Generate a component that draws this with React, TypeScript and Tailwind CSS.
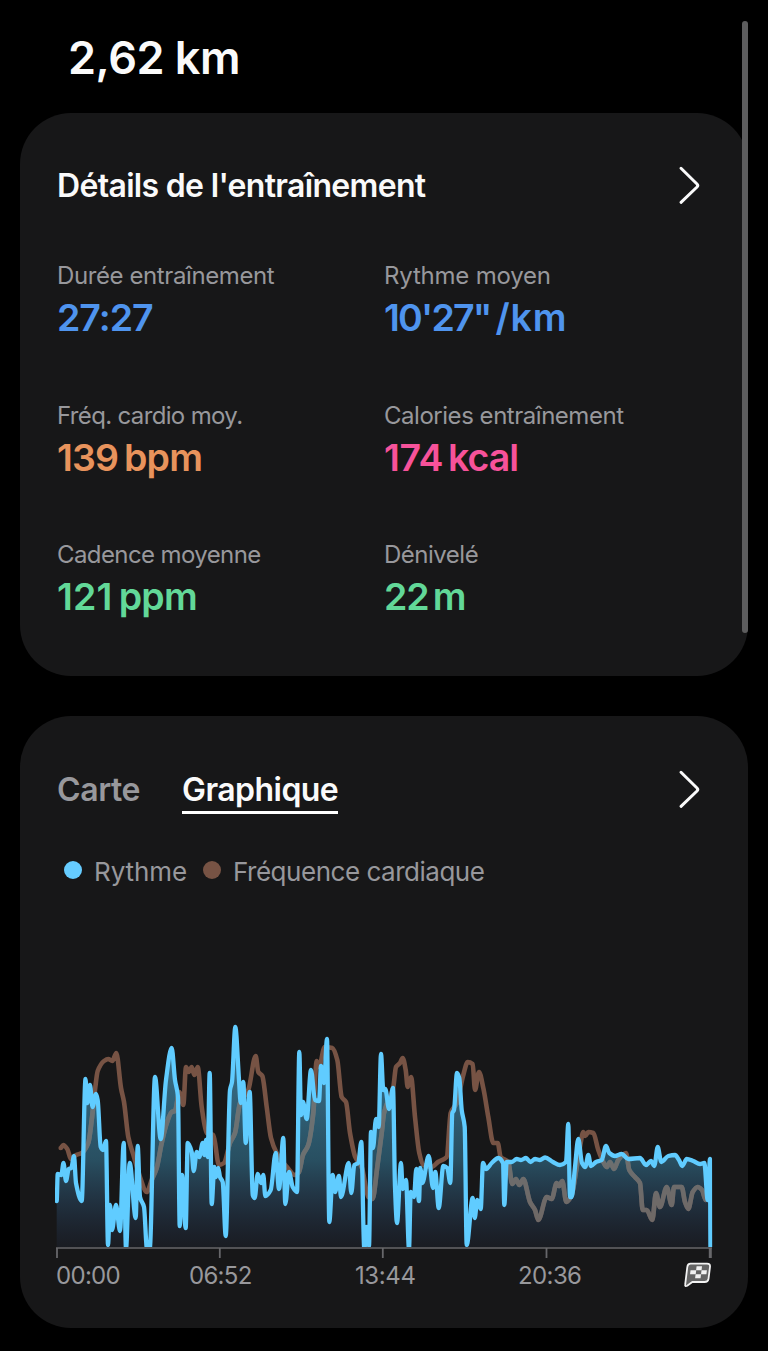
import { clsx } from "clsx";

const stats = [
  { label: "Durée entraînement", value: "27:27", unit: "", style: "text-[#4f94ee] tracking-[-1px]", labelStyle: "tracking-[-0.4px]" },
  { label: "Rythme moyen", value: "10'27\"", unit: "/km", style: "text-[#4f94ee] gap-[5px] tracking-[-1.8px]", unitStyle: "tracking-[0.8px]", labelStyle: "tracking-[-0.2px]" },
  { label: "Fréq. cardio moy.", value: "139", unit: "bpm", style: "text-[#e8935c] gap-[6px] tracking-[-0.9px]", unitStyle: "tracking-[-0.8px]", labelStyle: "tracking-[-0.65px]" },
  { label: "Calories entraînement", value: "174", unit: "kcal", style: "text-[#f7529a] gap-[5px] tracking-[-0.4px]", unitStyle: "tracking-[-1px]", labelStyle: "tracking-[-0.47px]" },
  { label: "Cadence moyenne", value: "121", unit: "ppm", style: "text-[#62d898] gap-[6px] tracking-[0.2px]", unitStyle: "tracking-[-0.8px]", labelStyle: "tracking-[-0.6px]" },
  { label: "Dénivelé", value: "22", unit: "m", style: "text-[#62d898] gap-[4px] tracking-[-1px]", unitStyle: "tracking-[-0.5px]", labelStyle: "tracking-[-0.5px]" },
];

const PACE =
  "56.7,1201 57.7,1174 61.3,1175 63.5,1163 66,1181 68.7,1169 71.3,1168 74,1156 76,1183 81.7,1201 85.5,1079 87.3,1103 90,1085 92.5,1107 96,1094 97.7,1100 100.7,1147 103,1150 106,1141 108,1245 110,1205 112,1230 116,1205 120,1231 123.7,1143 126,1249 129.7,1163 135.7,1218 137.7,1146 140,1197 144,1207 147,1249 149.7,1249 155,1077 160.7,1139 166,1080 171.7,1048 175,1080 178,1097 179.7,1226 182,1175 185.7,1228 187.7,1143 191.7,1152 193.7,1171 196.7,1152 199.3,1157 202.7,1143 204.5,1155 206,1140 207.7,1157 209.7,1073 211.7,1204 214.3,1167 216,1177 218.3,1168 220,1177 222.7,1182 225.7,1236 230,1090 232,1082 235.3,1027 239,1080 240.7,1103 243.3,1082 245.7,1143 249.7,1092 252.7,1195 254.7,1198 257.7,1174 261,1183 263.3,1175 265.3,1196 270.7,1190 275.7,1153 279,1189 283.3,1138 285.3,1204 289,1172 292.7,1187 297,1192 299.3,1052 301,1115 303,1102 306.7,1119 311,1070 315,1100 319,1101 321,1066 324,1083 327,1039 329.3,1222 332.7,1175 335,1192 339,1176 341,1197 348.7,1163 351.3,1193 354.3,1165 358.3,1163 361.3,1142 364.3,1249 366.7,1227 369,1246 371,1132 373,1148 376,1119 378.7,1127 381,1054 383.3,1090 385.3,1089 389,1109 393,1088 395,1187 397,1223 401,1163 402.7,1189 406,1180 409,1249 410.7,1192 414,1197 416.3,1169 419,1201 420.3,1168 422.3,1183 428.7,1156 433,1188 435.3,1172 438.7,1208 443.3,1166 447.3,1168 450.3,1183 452.3,1113 454,1110 457,1073 459.3,1078 461.7,1110 464.7,1127 466.7,1245 472.7,1198 474.7,1218 477.3,1200 480.7,1209 483,1163 486,1169 491.7,1163 498.3,1158 503,1163 504.3,1205 506.7,1162 511.7,1162 516.7,1159 521,1160 526,1158 530.5,1162 535,1159 540,1160 545,1157.5 553,1162 560,1165 566,1162 568.3,1124 570,1197 571.7,1197 575,1167 578.3,1139 582,1163 585.3,1167 588.3,1155 591,1166 596,1162 601.7,1160 606,1146 609.3,1153 615,1156 621.7,1154 628.3,1159 640,1158 646,1165 651,1161 654.3,1166 657.7,1147 661.3,1162 668.3,1156 675,1155 679,1160 682.3,1166 686.7,1159 693.3,1161 700,1164 704.3,1163 707.7,1200 710,1159 710.5,1249";

const HEART_RATE =
  "60.7,1148 63.3,1145 67.3,1149 71,1159 76,1155 81.7,1153 88.3,1143 91.7,1120 95,1090 97.7,1071 104,1061 108.3,1059 112.3,1061 116.3,1053 121,1088 124,1102 128.3,1137 134,1157 140,1177 146.7,1192 151.7,1180 156.7,1168 161.7,1143 166.5,1124 171.7,1112 175,1111 179.3,1092 183.3,1105 186,1067 188.7,1072 191.7,1067 194.3,1075 197.7,1067 201.7,1107 206.7,1133 213.3,1135 219,1165 224,1163 230,1143 235,1133 240,1103 248.3,1090 255.7,1056 258.3,1072 262.3,1076 266.7,1107 271,1138 276.7,1153 287,1167 295,1175 299,1172 303,1155 308.3,1145 313.3,1113 316.7,1061 319,1067 324.7,1047 332.3,1048 337.3,1060 341.7,1097 346,1102 350,1133 355.3,1157 361.7,1167 368.3,1197 372.5,1199 377.3,1167 381.7,1133 384,1113 393.3,1087 396,1067 400,1063 402.7,1058 405.7,1070 407.7,1087 411,1077 415,1117 419.3,1153 423.3,1165 431.7,1167 438,1162 446.7,1157 450.7,1113 456.7,1103 463.3,1075 467.7,1062 472.7,1064 475,1090 479,1072 483.3,1088 488.3,1117 493.3,1143 497.7,1143 500.7,1157 508.3,1162 512.3,1184 516,1179 519.3,1185 523.3,1179 530,1202 535,1210 538.3,1220 546.7,1197 551.7,1199 556.7,1183 559,1186 562.3,1181 566.3,1202 571.7,1195 576.7,1167 580,1147 583.3,1132 585.3,1136 588.3,1132 593.3,1133 598.3,1150 603.3,1162 606.7,1167 610,1162 614,1169 618.3,1160 626,1153 629.3,1170 635,1177 640,1183 642.7,1210 646.7,1210 652.3,1220 656,1193 660,1207 666.7,1187 671.7,1205 674,1187 681.7,1187 685,1202 688.3,1209 692.7,1192 697.7,1187 702,1190 705.7,1200";

// Smooth line through the samples that never overshoots a peak
const toPath = (points: string) => {
  const pts = points.split(" ").map((p) => p.split(",").map(Number));
  const slope = (i: number) => (pts[i + 1][1] - pts[i][1]) / (pts[i + 1][0] - pts[i][0]);
  const tangents = pts.map((_, i) => {
    if (i === 0 || i === pts.length - 1) return 0;
    const a = slope(i - 1);
    const b = slope(i);
    return a * b <= 0 ? 0 : (2 * a * b) / (a + b);
  });
  return pts.slice(1).reduce((d, [x, y], i) => {
    const [px, py] = pts[i];
    const h = (x - px) / 3;
    return `${d}C${px + h},${py + tangents[i] * h} ${x - h},${y - tangents[i + 1] * h} ${x},${y}`;
  }, `M${pts[0][0]},${pts[0][1]}`);
};

const pacePath = toPath(PACE);
const paceArea = `${pacePath}L56.7,1249Z`;
const heartRatePath = toPath(HEART_RATE);

const Chevron = () => (
  <svg className="h-10 w-6 shrink-0" viewBox="0 0 24 40" fill="none" stroke="#fafafa" strokeWidth="3" strokeLinecap="round" strokeLinejoin="round">
    <path d="M4 3.3 20 19Q21.5 20.5 20 22L4 37.3" />
  </svg>
);

const FinishFlag = () => (
  <svg className="mb-1 h-7 w-8 shrink-0" viewBox="682 1260 32 28">
    <path
      d="M690.5 1263.6H707Q710.4 1263.6 710 1267L708.5 1278.8Q708 1282 704.6 1282H692.3L687.2 1285.8Q684.8 1287 685.2 1284.4L687.3 1267Q687.7 1263.6 690.5 1263.6Z"
      fill="#646464"
      stroke="#f2f2f2"
      strokeWidth="1.8"
      strokeLinejoin="round"
    />
    <g fill="#f2f2f2">
      <path d="M696.6 1266.3h5.4l-.5 4h-5.4z" />
      <path d="M690.5 1270.3h5.7l-.5 4h-5.7z" />
      <path d="M701.5 1270.3h5.4l-.5 4h-5.4z" />
      <path d="M695.6 1274.3h5.4l-.5 4h-5.4z" />
    </g>
  </svg>
);

const WorkoutChart = () => (
  <svg className="block h-[248px] w-[658px]" viewBox="55 1012 658 248" fill="none">
    <defs>
      <linearGradient id="paceFill" gradientUnits="userSpaceOnUse" x1="0" y1="1027" x2="0" y2="1248">
        <stop offset="0" stopColor="#5fc8f8" stopOpacity="0.56" />
        <stop offset="0.6" stopColor="#48b4e4" stopOpacity="0.36" />
        <stop offset="1" stopColor="#4068b8" stopOpacity="0.06" />
      </linearGradient>
      <clipPath id="plot">
        <rect x="55" y="1012" width="657.3" height="235" />
      </clipPath>
      <clipPath id="paceArea">
        <path d={paceArea} />
      </clipPath>
    </defs>
    <g clipPath="url(#plot)" strokeLinejoin="round" strokeLinecap="round">
      <path d={heartRatePath} stroke="#775344" strokeWidth="4.6" />
      <path d={paceArea} fill="url(#paceFill)" />
      {/* the heart rate fades to grey where the pace area covers it */}
      <g clipPath="url(#paceArea)">
        <path d={heartRatePath} stroke="#6f6d6b" strokeOpacity="0.75" strokeWidth="4.6" />
      </g>
      <path d={pacePath} stroke="#60ccff" strokeWidth="4.3" />
    </g>
    <path d="M56 1248H712" stroke="#67676a" strokeWidth="1.7" />
    <path d="M57 1248V1258M219.8 1248V1258M382.8 1248V1258M546.5 1248V1258" stroke="#67676a" strokeWidth="1.8" />
    <path d="M710.3 1248V1258" stroke="#67676a" strokeWidth="3" />
  </svg>
);

const App = () => {
  return (
    <div className="relative h-[1351px] w-[768px] overflow-hidden bg-black font-['Inter',sans-serif]">
      <header className="flex h-[113px] items-center pt-px pl-[68px]">
        <h1 className="text-[45px] leading-none font-semibold tracking-[-0.5px] text-[#fafafa]">2,62 km</h1>
      </header>

      <section className="mx-5 h-[563px] rounded-[51px] bg-[#171718] px-[37px] pt-[52px]">
        <div className="flex h-10 items-center justify-between pr-[10px]">
          <h2 className="pt-0.5 text-[32px] leading-10 font-semibold tracking-[-0.68px] text-[#fafafa]">Détails de l'entraînement</h2>
          <Chevron />
        </div>
        <div className="mt-[56px] grid grid-cols-2">
          {stats.map((stat) => (
            <div key={stat.label} className="h-[139.5px]">
              <p className={clsx("text-[24px] leading-[30px] text-[#98989c]", stat.labelStyle)}>{stat.label}</p>
              <p className={clsx("mt-[5px] flex text-[37.5px] leading-[44px] font-semibold", stat.style)}>
                <span>{stat.value}</span>
                {stat.unit && <span className={stat.unitStyle}>{stat.unit}</span>}
              </p>
            </div>
          ))}
        </div>
      </section>

      <section className="mx-5 mt-10 h-[612px] rounded-[51px] bg-[#171718] px-[37px] pt-[53px]">
        <div className="flex h-[45px] items-start justify-between pr-[10px]">
          <div className="flex pt-px text-[32px] leading-10 font-semibold">
            <span className="w-[125px] tracking-[-0.4px] text-[#98989c]">Carte</span>
            <span className="h-[44px] border-b-[3px] border-white tracking-[-0.55px] text-[#fafafa]">Graphique</span>
          </div>
          <Chevron />
        </div>
        <div className="mt-[41px] flex h-8 items-center text-[26px] text-[#98989c]">
          <span className="mb-0.5 ml-[7px] size-[18px] rounded-full bg-[#66ccff]" />
          <span className="ml-[12px] tracking-[-0.1px]">Rythme</span>
          <span className="mb-0.5 ml-4 size-[18px] rounded-full bg-[#775344]" />
          <span className="ml-[12px] tracking-[-0.48px]">Fréquence cardiaque</span>
        </div>
        <div className="mt-[125px] -ml-0.5">
          <WorkoutChart />
        </div>
        <div className="-ml-px flex h-8 items-center text-[24px] tracking-[-0.7px] text-[#98989c]">
          <span className="w-[133px] shrink-0">00:00</span>
          <span className="w-[166px] shrink-0">06:52</span>
          <span className="w-[163px] shrink-0 tracking-[-0.4px]">13:44</span>
          <span className="w-[164px] shrink-0 tracking-[-0.6px]">20:36</span>
          <FinishFlag />
        </div>
      </section>

      {/* scroll indicator lies over the cards */}
      <div className="absolute top-[21px] left-[742px] h-[612px] w-1.5 rounded-full bg-[#5d5d5e]" />
    </div>
  );
};

export default App;
